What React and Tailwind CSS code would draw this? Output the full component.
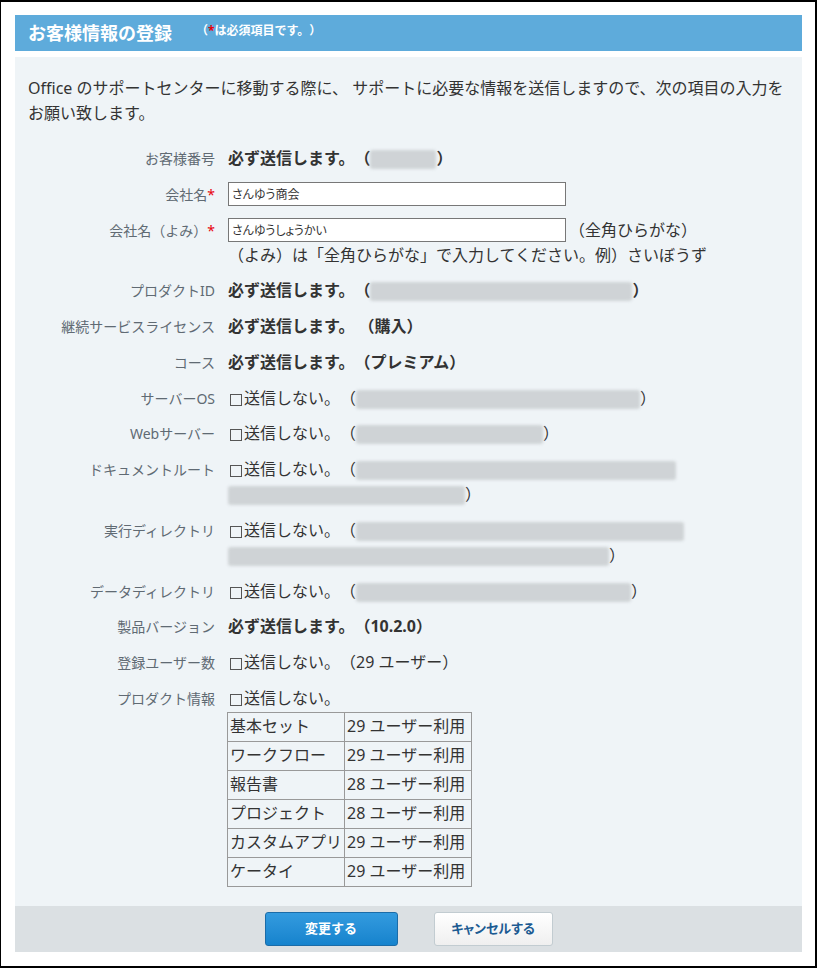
import React from 'react'

// blurred placeholder for masked values
function Blur({ w }) {
  return <span className={`inline-block h-[19px] align-middle rounded-[3px] bg-[#cfd3d6] blur-[1.5px] ${w}`} />
}

function Box() {
  return (
    <span className="inline-flex w-[16px] h-[16px] items-center justify-center align-[-2px]">
      <span className="block w-[12px] h-[12px] border border-[#555]" />
    </span>
  )
}

function Row({ label, req, children }) {
  return (
    <div className="grid grid-cols-[200px_1fr] gap-x-[13px]">
      <div className="text-right text-[14px] leading-[25px] text-[#606a73] whitespace-nowrap">
        {label}
        {req && <span className="text-[#e8000b]">*</span>}
      </div>
      <div className="text-[16px] leading-[25px] text-[#333]">{children}</div>
    </div>
  )
}

const PRODUCTS = [
  ['基本セット', '29 ユーザー利用'],
  ['ワークフロー', '29 ユーザー利用'],
  ['報告書', '28 ユーザー利用'],
  ['プロジェクト', '28 ユーザー利用'],
  ['カスタムアプリ', '29 ユーザー利用'],
  ['ケータイ', '29 ユーザー利用'],
]

export default function App() {
  return (
    <div className="w-[817px] h-[968px] bg-white border-l border-t-2 border-r-2 border-b-2 border-black pl-[14px] pr-[13px] pt-[13px] font-['Noto_Sans','Noto_Sans_CJK_JP',sans-serif] [text-spacing-trim:space-all]">

      {/* Header */}
      <div className="h-[36px] bg-[#5eabdb] pl-[13px] flex items-center">
        <h1 className="text-[18px] font-bold text-white leading-none">お客様情報の登録</h1>
        <p className="ml-[24px] mb-[5px] text-[12px] font-bold text-white leading-none">
          （<span className="text-[#e8000b]">*</span>は必須項目です。）
        </p>
      </div>

      {/* Body */}
      <div className="mt-[6px] bg-[#eff4f7] pt-[19px] pb-[19px]">
        <p className="px-[13px] text-[16px] leading-[25px] text-[#333]">
          <span className="block whitespace-nowrap">Office のサポートセンターに移動する際に、 サポートに必要な情報を送信しますので、次の項目の入力を</span>
          <span className="block">お願い致します。</span>
        </p>

        <div className="mt-[20px] flex flex-col gap-[10.75px]">
          <Row label="お客様番号">
            <span className="font-bold">必ず送信します。（<Blur w="w-[66px]" />）</span>
          </Row>

          <Row label="会社名" req>
            <div className="h-[25px] flex items-center">
              <input
                readOnly
                defaultValue="さんゆう商会"
                className="w-[338px] h-[24px] border border-[#777] bg-white px-[3px] text-[12px] text-[#333] outline-none [font-feature-settings:'palt']"
              />
            </div>
          </Row>

          <Row label="会社名（よみ）" req>
            <div className="h-[25px] flex items-center">
              <input
                readOnly
                defaultValue="さんゆうしょうかい"
                className="w-[338px] h-[24px] border border-[#777] bg-white px-[3px] text-[12px] text-[#333] outline-none [font-feature-settings:'palt']"
              />
              <span className="ml-[3px]">（全角ひらがな）</span>
            </div>
            <div>（よみ）は「全角ひらがな」で入力してください。例）さいぼうず</div>
          </Row>

          <Row label="プロダクトID">
            <span className="font-bold">必ず送信します。（<Blur w="w-[262px]" />）</span>
          </Row>

          <Row label="継続サービスライセンス">
            <span className="font-bold">必ず送信します。 （購入）</span>
          </Row>

          <Row label="コース">
            <span className="font-bold">必ず送信します。（プレミアム）</span>
          </Row>

          <Row label="サーバーOS">
            <Box />送信しない。（<Blur w="w-[284px]" />）
          </Row>

          <Row label="Webサーバー">
            <Box />送信しない。（<Blur w="w-[187px]" />）
          </Row>

          <Row label="ドキュメントルート">
            <div><Box />送信しない。（<Blur w="w-[320px]" /></div>
            <div><Blur w="w-[237px]" />）</div>
          </Row>

          <Row label="実行ディレクトリ">
            <div><Box />送信しない。（<Blur w="w-[328px]" /></div>
            <div><Blur w="w-[381px]" />）</div>
          </Row>

          <Row label="データディレクトリ">
            <Box />送信しない。（<Blur w="w-[275px]" />）
          </Row>

          <Row label="製品バージョン">
            <span className="font-bold">必ず送信します。（10.2.0）</span>
          </Row>

          <Row label="登録ユーザー数">
            <Box />送信しない。（29 ユーザー）
          </Row>

          <Row label="プロダクト情報">
            <div><Box />送信しない。</div>
            <table className="mt-[1px] -ml-px border-collapse table-fixed w-[245px]">
              <tbody>
                {PRODUCTS.map(([name, count]) => (
                  <tr key={name}>
                    <td className="w-[117px] h-[29px] border border-[#999] pl-[2px] pr-0 whitespace-nowrap">{name}</td>
                    <td className="h-[29px] border border-[#999] pl-[2px] whitespace-nowrap">{count}</td>
                  </tr>
                ))}
              </tbody>
            </table>
          </Row>
        </div>
      </div>

      {/* Footer */}
      <div className="h-[46px] bg-[#dbe0e3] flex items-center justify-center gap-[36px]">
        <button
          type="button"
          className="w-[133px] h-[34px] rounded-[3px] border border-[#1b6ca8] bg-gradient-to-b from-[#339bdf] to-[#1583cd] text-white text-[13px] font-bold"
        >
          変更する
        </button>
        <button
          type="button"
          className="w-[119px] h-[34px] rounded-[3px] border border-[#c2ccd1] bg-gradient-to-b from-white to-[#efefef] text-[#1c5b92] text-[13px] font-bold [font-feature-settings:'palt']"
        >
          キャンセルする
        </button>
      </div>
    </div>
  )
}
